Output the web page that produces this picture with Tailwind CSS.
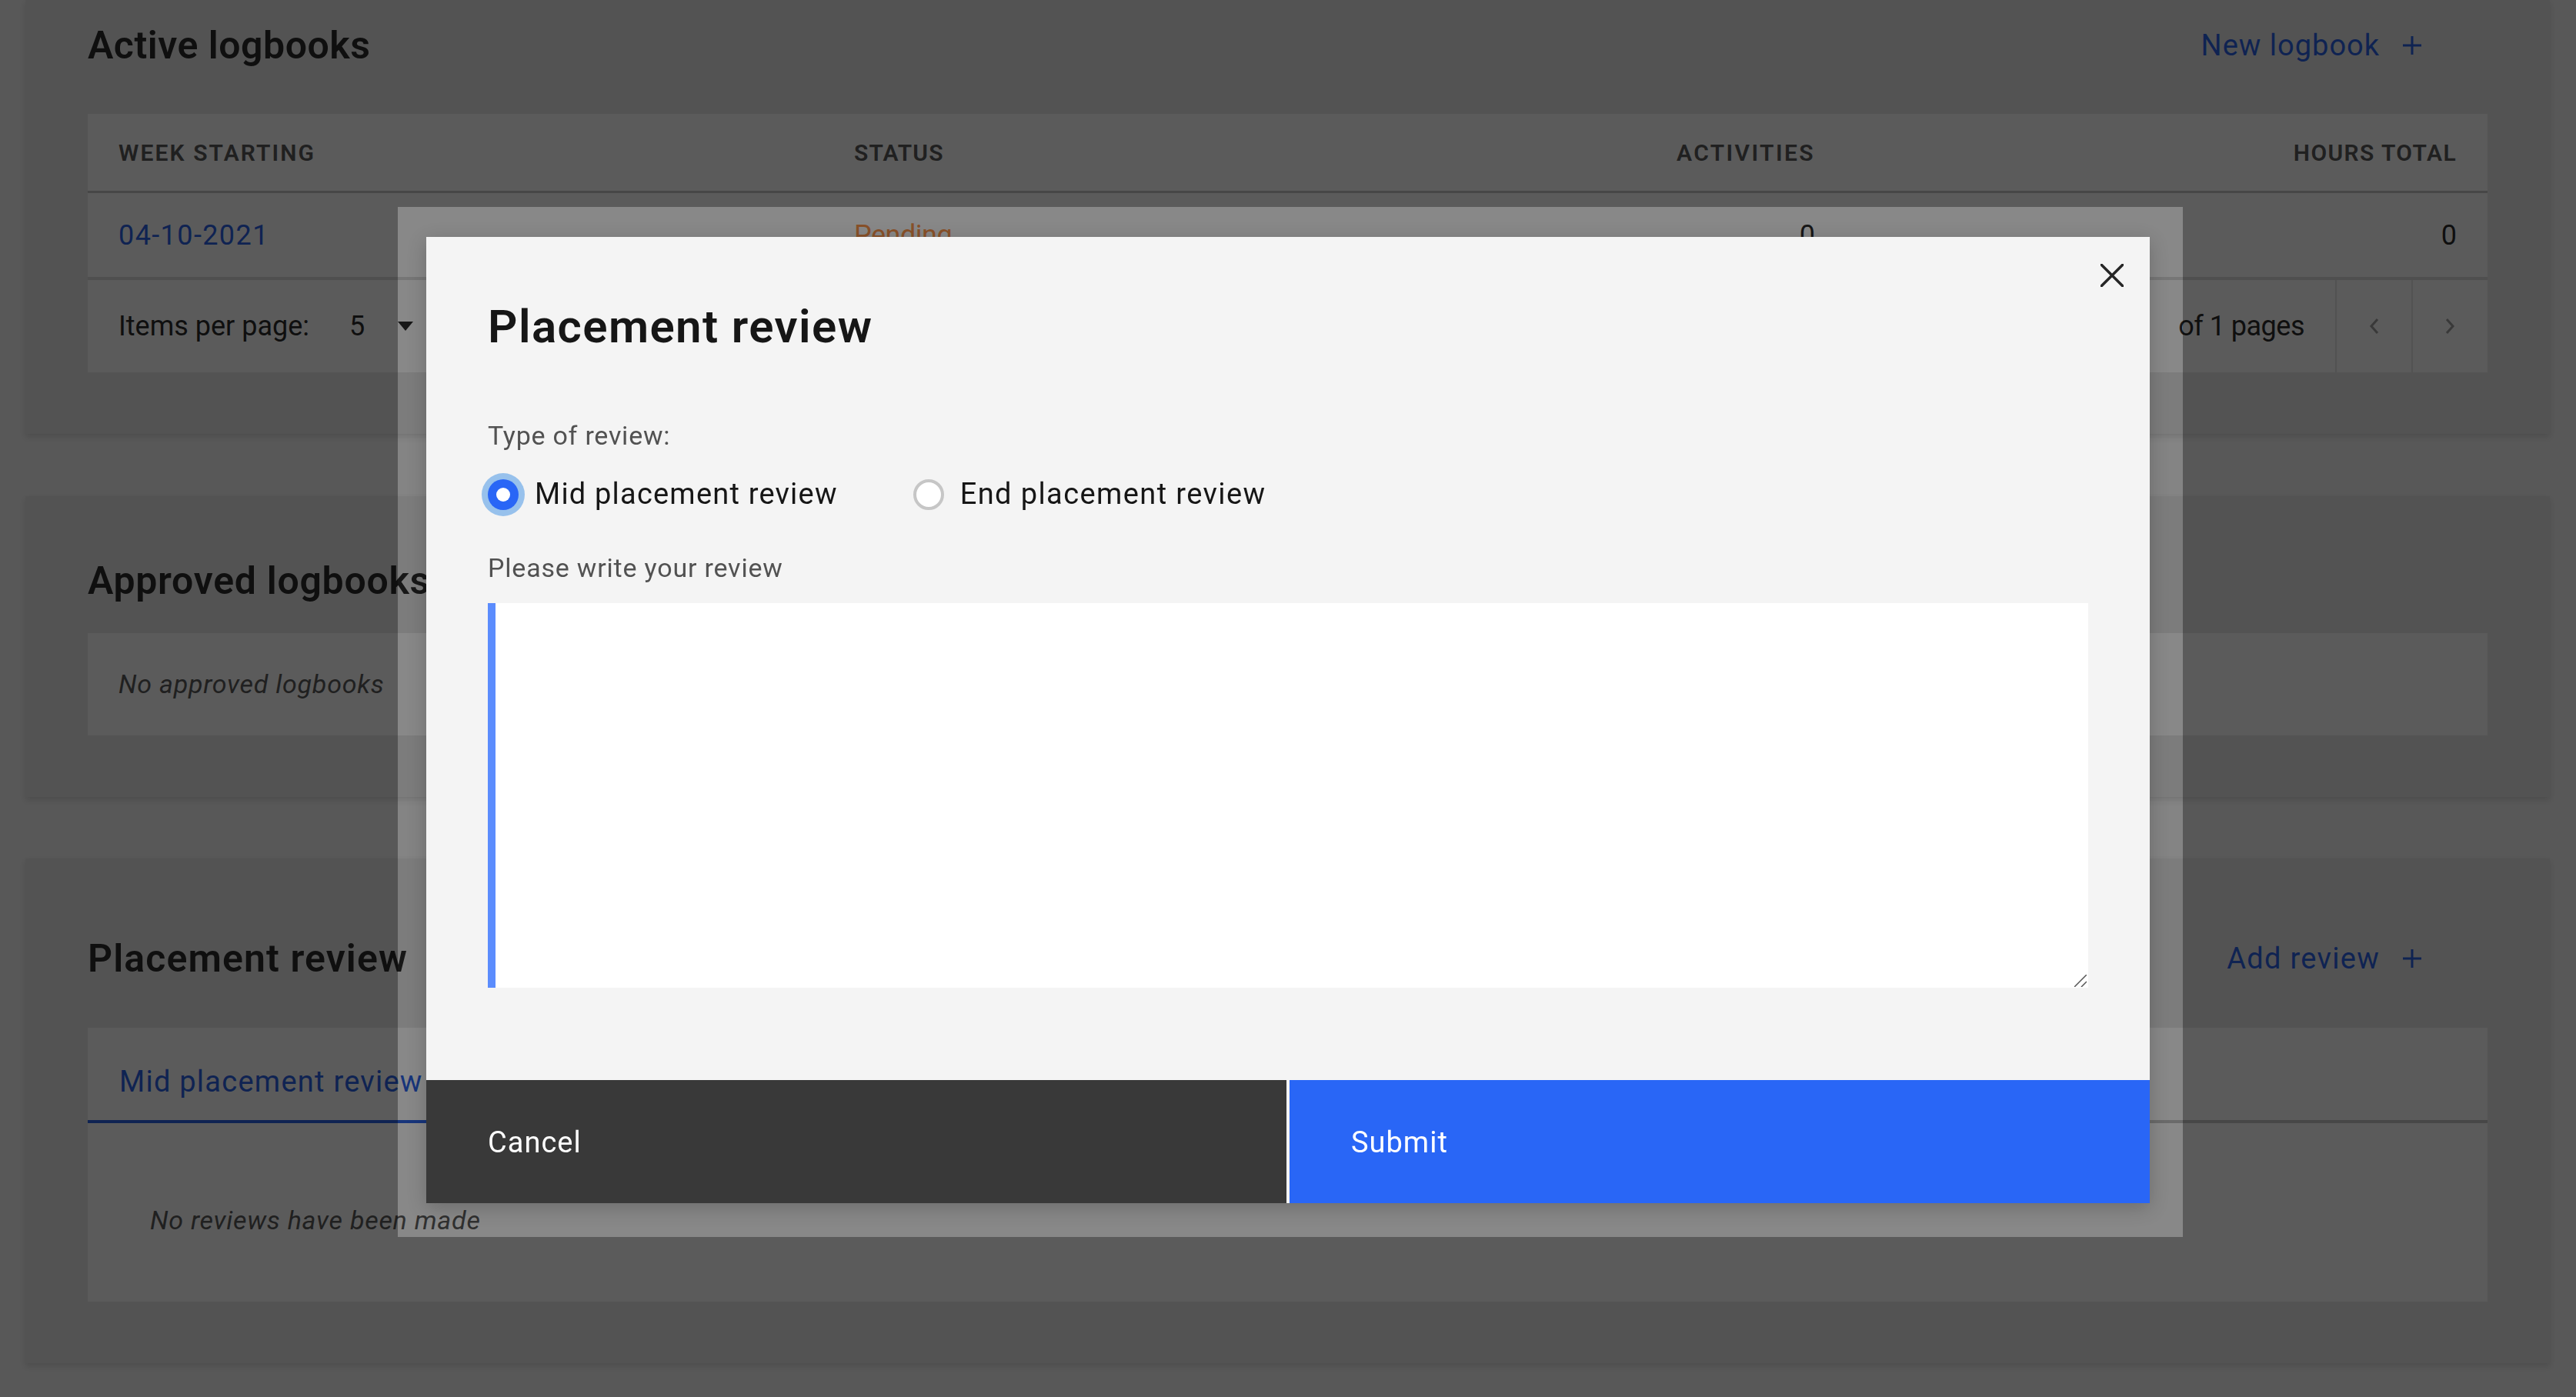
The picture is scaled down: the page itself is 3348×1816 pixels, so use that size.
<!DOCTYPE html>
<html lang="en">
  <head>
    <meta charset="UTF-8" />
    <title>Placement review</title>
    <script src="https://cdn.jsdelivr.net/npm/@tailwindcss/browser@4"></script>
  </head>
  <body class="relative h-[1816px] overflow-hidden bg-[#f4f4f4] font-['Roboto',sans-serif] text-black">
    <main class="flex flex-col pl-[33px] w-[3314px]">
      <!-- Active logbooks -->
      <section class="h-[564px] bg-[#e5e5e5] px-[81px] shadow-[0_4px_8px_rgba(0,0,0,0.15)]">
        <div class="flex h-[118px] items-center justify-between">
          <h2 class="text-[50px] font-semibold tracking-[0.5px]">Active logbooks</h2>
          <a class="flex items-center gap-[29px] pr-[85px] text-[38px] tracking-[1px] text-[#0043e0]">New logbook
            <svg class="w-[26px] h-[26px]" viewBox="0 0 26 26" fill="none" stroke="currentColor" stroke-width="3"><path d="M13 1v24M1 13h24" /></svg>
          </a>
        </div>
        <div class="mt-[30px] bg-white">
          <div class="grid h-[103px] grid-cols-[956px_400px_849px_1fr] items-center border-b-[3px] border-[#bdbdbd] pl-[40px] pr-[40px] text-[30px] font-semibold text-[#393939]">
            <span class="tracking-[2.1px]">WEEK STARTING</span>
            <span class="tracking-[1.1px]">STATUS</span>
            <span class="text-right tracking-[2.4px]">ACTIVITIES</span>
            <span class="text-right tracking-[1.4px]">HOURS TOTAL</span>
          </div>
          <div class="grid h-[113px] grid-cols-[956px_400px_849px_1fr] items-center border-b-[4px] border-[#d7d7d7] pl-[40px] pr-[40px] text-[36px]">
            <a class="tracking-[1.4px] text-[#0043e0]">04-10-2021</a>
            <span class="tracking-[-0.5px] text-[#ff832b]">Pending</span>
            <span class="text-right">0</span>
            <span class="text-right">0</span>
          </div>
          <div class="flex h-[120px] items-center text-[36px]">
            <span class="pl-[40px]">Items per page:</span>
            <span class="ml-[52px]">5</span>
            <svg class="ml-[43px] w-[20px] h-[12px]" viewBox="0 0 20 12" fill="currentColor"><path d="M0 0h20L10 12z" /></svg>
            <span class="ml-auto pr-[40px] tracking-[-0.5px]">of 1 pages</span>
            <div class="flex h-full w-[99px] items-center justify-center border-l-2 border-[#e0e0e0] text-[#8d8d8d]">
              <svg class="w-[13px] h-[20px]" viewBox="0 0 13 20" fill="none" stroke="currentColor" stroke-width="3"><path d="M11 1 3 10l8 9" /></svg>
            </div>
            <div class="flex h-full w-[99px] items-center justify-center border-l-2 border-[#e0e0e0] text-[#8d8d8d]">
              <svg class="w-[13px] h-[20px]" viewBox="0 0 13 20" fill="none" stroke="currentColor" stroke-width="3"><path d="m2 1 8 9-8 9" /></svg>
            </div>
          </div>
        </div>
      </section>

      <!-- Approved logbooks -->
      <section class="mt-[81px] h-[391px] bg-[#e5e5e5] px-[81px] pt-[80px] shadow-[0_4px_8px_rgba(0,0,0,0.15)]">
        <h2 class="text-[50px] font-semibold leading-[60px] tracking-[0.7px]">Approved logbooks</h2>
        <div class="mt-[38px] flex h-[133px] items-center bg-white pl-[40px] text-[34px] italic tracking-[0.75px] text-[#393939]">No approved logbooks</div>
      </section>

      <!-- Placement review -->
      <section class="mt-[80px] h-[656px] bg-[#e5e5e5] px-[81px] pt-[100px] shadow-[0_4px_8px_rgba(0,0,0,0.15)]">
        <div class="flex h-[60px] items-center justify-between">
          <h2 class="text-[50px] font-semibold leading-[60px] tracking-[1.1px]">Placement review</h2>
          <a class="flex items-center gap-[29px] pr-[85px] text-[38px] tracking-[1.3px] text-[#0043e0]">Add review
            <svg class="w-[26px] h-[26px]" viewBox="0 0 26 26" fill="none" stroke="currentColor" stroke-width="3"><path d="M13 1v24M1 13h24" /></svg>
          </a>
        </div>
        <div class="mt-[60px] h-[356px] bg-white">
          <div class="h-[124px] border-b-[4px] border-[#bdbdbd]">
            <div class="flex h-[124px] w-[500px] items-center border-b-[4px] border-[#0043e0] pl-[41px] pt-[20px] text-[38px] tracking-[1.25px] text-[#0043e0]">Mid placement review</div>
          </div>
          <p class="pl-[81px] pt-[101px] text-[34px] italic tracking-[0.75px] text-[#393939]">No reviews have been made</p>
        </div>
      </section>
    </main>

    <!-- Modal over the dimmed page -->
    <div class="absolute inset-0 bg-[#161616]/70">
      <div class="absolute left-[517px] top-[269px] h-[1340px] w-[2321px] backdrop-brightness-150 pb-[45px] pl-[37px] pr-[44px] pt-[39px]">
        <div class="relative flex h-full flex-col bg-[#f4f4f4] shadow-[0_6px_24px_rgba(0,0,0,0.2)]">
          <svg class="absolute right-[34px] top-[35px] w-[30px] h-[30px]" viewBox="0 0 30 30" fill="none" stroke="#262626" stroke-width="3.5" stroke-linecap="round"><path d="m1 1 28 28M29 1 1 29" /></svg>
          <div class="flex-1 px-[80px]">
            <h1 class="mt-[87px] text-[60px] font-semibold leading-[60px] tracking-[1.4px] text-[#161616]">Placement review</h1>
            <p class="mt-[91px] text-[34px] leading-[40px] tracking-[0.75px] text-[#525252]">Type of review:</p>
            <div class="mt-[29px] flex h-[55px] items-center gap-[98px] text-[38px] text-[#161616]">
              <label class="flex items-center gap-[21px] tracking-[1.2px]">
                <span class="flex w-[40px] h-[40px] items-center justify-center rounded-full bg-[#2966f6] shadow-[0_0_0_8px_#97c1ec]"><span class="w-[18px] h-[18px] rounded-full bg-white"></span></span>
                Mid placement review
              </label>
              <label class="flex items-center gap-[21px] tracking-[1.4px]">
                <span class="w-[40px] h-[40px] rounded-full border-[4px] border-[#c6c6c6] bg-white"></span>
                End placement review
              </label>
            </div>
            <p class="mt-[48px] text-[34px] leading-[40px] tracking-[0.8px] text-[#525252]">Please write your review</p>
            <div class="relative mt-[26px] h-[500px] w-[2080px]">
              <textarea class="block h-full w-full resize-none border-l-[10px] border-[#5b8cfd] bg-white outline-none"></textarea>
              <svg class="absolute bottom-[1px] right-[2px] w-[16px] h-[16px]" viewBox="0 0 16 16" fill="none" stroke="#555" stroke-width="1.5"><path d="M16 0 0 16M16 9l-7 7" /></svg>
            </div>
          </div>
          <div class="flex h-[160px] gap-[4px] text-[38px] tracking-[1px] text-white">
            <button class="flex-1 bg-[#393939] pl-[80px] pt-[2px] text-left">Cancel</button>
            <button class="flex-1 bg-[#2966f6] pl-[80px] pt-[2px] text-left">Submit</button>
          </div>
        </div>
      </div>
    </div>
  </body>
</html>
